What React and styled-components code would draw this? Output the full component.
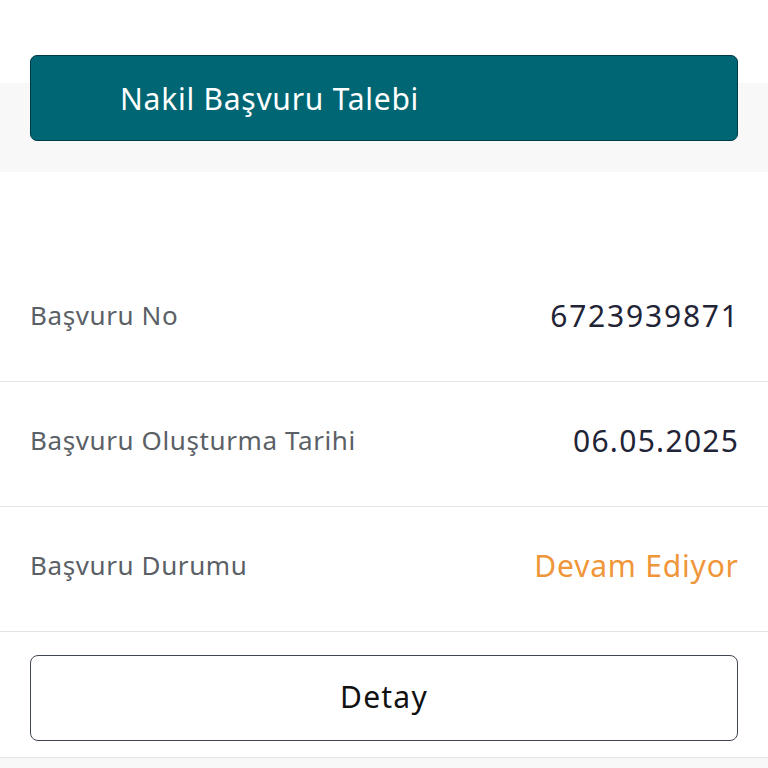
import React from 'react';
import styled, { createGlobalStyle } from 'styled-components';

const GlobalStyle = createGlobalStyle`
  body {
    margin: 0;
    background: #ffffff;
    font-family: "Noto Sans", sans-serif;
  }
`;

const Header = styled.header`
  padding: 55px 30px 31px;
  background: linear-gradient(#ffffff 0 83px, #f8f8f8 83px);
`;

const TitleCard = styled.div`
  height: 86px;
  box-sizing: border-box;
  display: flex;
  align-items: center;
  padding-left: 89px;
  background: #006673;
  border: 1px solid #003c47;
  border-radius: 7px;
  color: #ffffff;
  font-size: 30px;
  letter-spacing: 0.75px;
`;

const List = styled.section`
  padding-top: 85px;
`;

const Row = styled.div`
  height: 125px;
  box-sizing: border-box;
  display: flex;
  align-items: center;
  justify-content: space-between;
  padding: 0 30px 8px;
  border-bottom: 1px solid #e4e4e4;
`;

const Label = styled.span`
  color: #5b5f66;
  font-size: 26px;
  letter-spacing: 0.6px;
`;

const Value = styled.span`
  color: ${p => (p.status ? '#f0963a' : '#1f2436')};
  font-size: 30px;
  letter-spacing: ${p => p.spacing}px;
  margin-right: -${p => p.spacing}px;
`;

const Actions = styled.div`
  padding: 23px 30px 16px;
  border-bottom: 1px solid #e4e4e4;
`;

const DetailButton = styled.button`
  width: 100%;
  height: 86px;
  background: #ffffff;
  border: 1.5px solid #3f4652;
  border-radius: 8px;
  color: #111111;
  font-family: "Noto Sans", sans-serif;
  font-size: 30px;
  letter-spacing: 1.2px;
  padding-bottom: 4px;
`;

const Footer = styled.div`
  height: 40px;
  background: #f8f8f8;
`;

const rows = [
  { label: 'Başvuru No', value: '6723939871', spacing: 1.8 },
  { label: 'Başvuru Oluşturma Tarihi', value: '06.05.2025', spacing: 1.3 },
  { label: 'Başvuru Durumu', value: 'Devam Ediyor', spacing: 0.8, status: true },
];

export default function App() {
  return (
    <>
      <GlobalStyle />
      <Header>
        <TitleCard>Nakil Başvuru Talebi</TitleCard>
      </Header>
      <List>
        {rows.map(r => (
          <Row key={r.label}>
            <Label>{r.label}</Label>
            <Value status={r.status} spacing={r.spacing}>{r.value}</Value>
          </Row>
        ))}
      </List>
      <Actions>
        <DetailButton>Detay</DetailButton>
      </Actions>
      <Footer />
    </>
  );
}
